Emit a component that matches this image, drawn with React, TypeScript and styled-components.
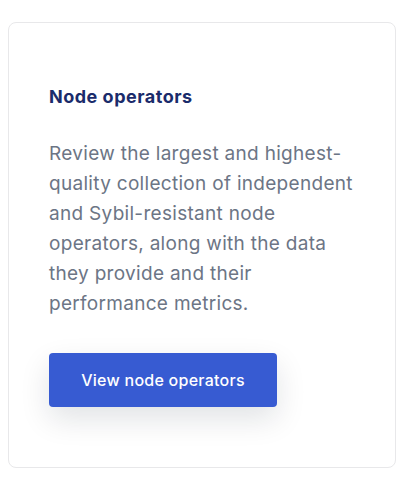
import React from 'react';
import styled, { createGlobalStyle } from 'styled-components';

const GlobalStyle = createGlobalStyle`
  body {
    margin: 0;
    background: #ffffff;
    font-family: Inter, 'Noto Sans', sans-serif;
  }
`;

const Page = styled.div`
  padding: 22px 12px 10px 8px;
`;

const Card = styled.section`
  box-sizing: border-box;
  width: 388px;
  min-height: 445px;
  padding: 62px 40px 60px 40px;
  border: 1px solid #e8e8ea;
  border-radius: 8px;
  background: #fff;
  display: flex;
  flex-direction: column;
  align-items: flex-start;
`;

const Title = styled.h3`
  margin: 0;
  font-size: 18px;
  line-height: 24px;
  font-weight: 700;
  color: #1a2b6b;
  letter-spacing: 0.5px;
`;

const Text = styled.p`
  margin: 30px 0 34px;
  font-size: 19px;
  line-height: 30px;
  font-weight: 400;
  color: #6c7585;
  letter-spacing: 0.3px;
  width: 310px;
`;

const Button = styled.a`
  display: inline-flex;
  align-items: center;
  justify-content: center;
  width: 228px;
  height: 54px;
  border-radius: 4px;
  background: #375bd2;
  color: #fff;
  font-size: 16px;
  font-weight: 500;
  letter-spacing: 0.25px;
  text-decoration: none;
  box-shadow: 0 12px 30px rgba(12, 22, 44, 0.12);
`;

const App: React.FC = () => {
  return (
    <>
      <GlobalStyle />
      <Page>
        <Card>
          <Title>Node operators</Title>
          <Text>
            Review the largest and highest-quality collection of independent and
            Sybil-resistant node operators, along with the data they provide and
            their performance metrics.
          </Text>
          <Button href="#">View node operators</Button>
        </Card>
      </Page>
    </>
  );
};

export default App;
